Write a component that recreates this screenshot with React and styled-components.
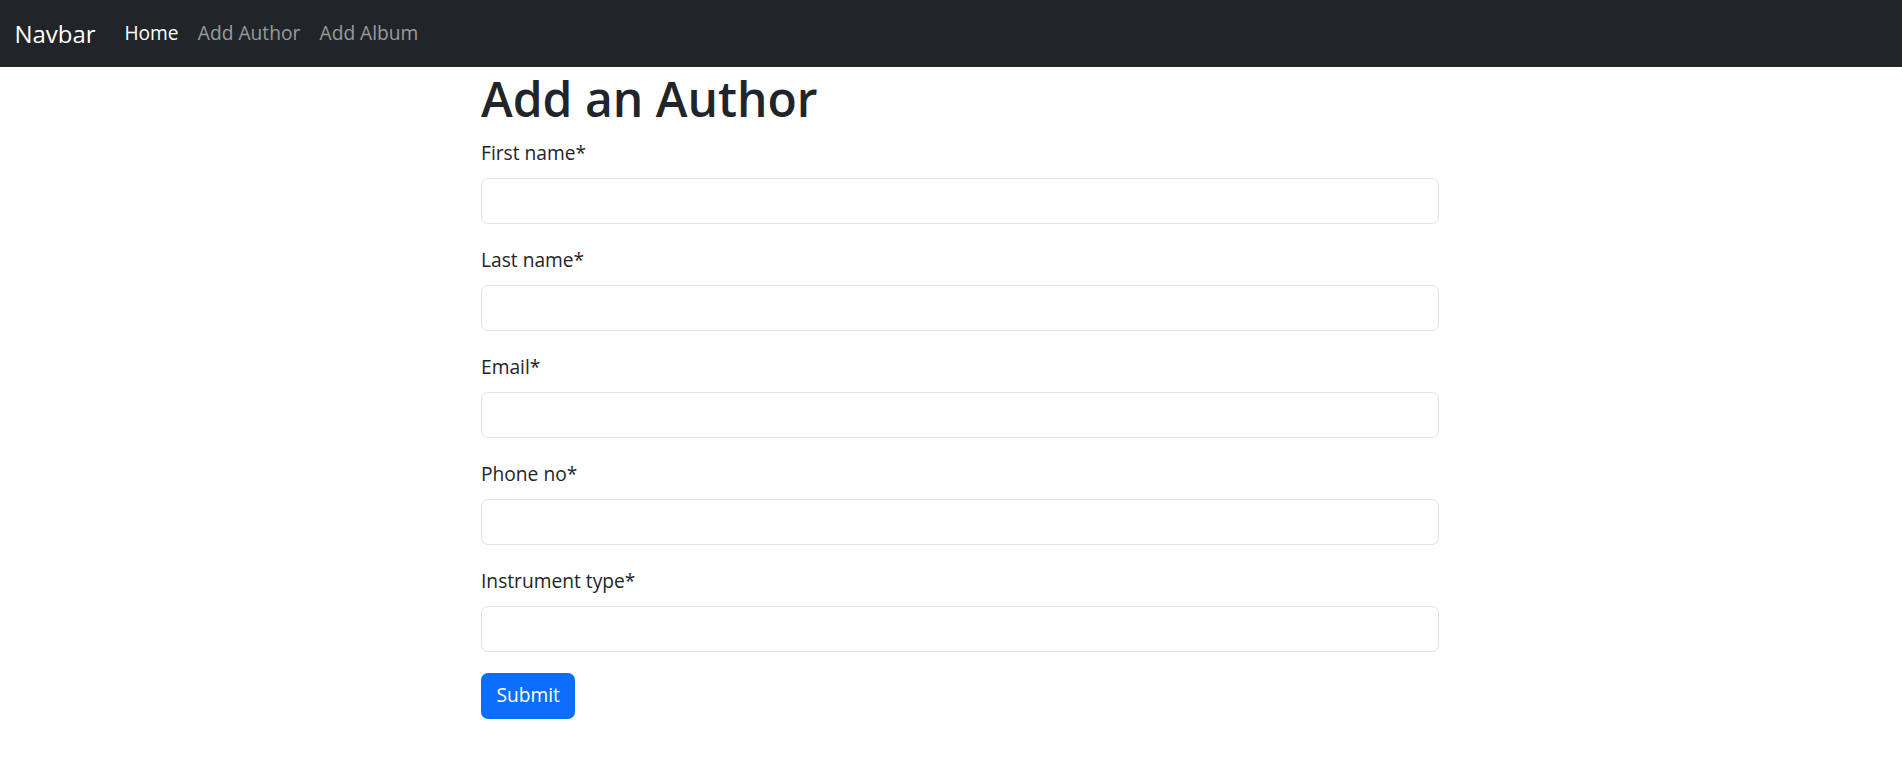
import React, { useState } from "react";
import styled, { createGlobalStyle } from "styled-components";

const GlobalStyle = createGlobalStyle`
  body {
    margin: 0;
    background: #fff;
    color: #212529;
    font-family: "Open Sans", "Noto Sans", "Liberation Sans", sans-serif;
    font-size: 19.2px;
    line-height: 1.5;
  }
  * {
    box-sizing: border-box;
  }
`;

const NavStyle = styled.nav`
  display: flex;
  align-items: center;
  height: 67px;
  padding: 0 14.4px;
  background: #212529;
`;

const Brand = styled.a`
  color: #fff;
  font-size: 24px;
  line-height: 36px;
  margin-right: 19.2px;
  text-decoration: none;
`;

const NavLink = styled.a`
  padding: 0 9.6px;
  font-size: 19.2px;
  color: ${(props) => (props.active ? "#fff" : "rgba(255, 255, 255, 0.55)")};
  text-decoration: none;
`;

const Container = styled.div`
  width: 958px;
  margin-left: calc(50% - 470px);
  padding-top: 3px;
`;

const Title = styled.h1`
  margin: 0 0 11.6px;
  font-size: 48px;
  font-weight: 600;
  line-height: 1.2;
`;

const Group = styled.div`
  margin-bottom: 22.6px;
`;

const Label = styled.label`
  display: block;
  margin-bottom: 9.6px;
  line-height: 28.8px;
`;

const Input = styled.input`
  display: block;
  width: 100%;
  height: 46px;
  padding: 7px 14px;
  font: inherit;
  border: 1px solid #dee2e6;
  border-radius: 7px;
  outline: none;
`;

const Button = styled.button`
  margin-top: -1.6px;
  height: 46px;
  padding: 0 15.4px;
  font: inherit;
  color: #fff;
  background: #0d6efd;
  border: none;
  border-radius: 7px;
`;

const fields = [
  { name: "firstName", label: "First name*" },
  { name: "lastName", label: "Last name*" },
  { name: "email", label: "Email*" },
  { name: "phone", label: "Phone no*" },
  { name: "instrument", label: "Instrument type*" },
];

const App = () => {
  const [author, setAuthor] = useState({
    firstName: "",
    lastName: "",
    email: "",
    phone: "",
    instrument: "",
  });

  const inputChange = (e) => {
    setAuthor({ ...author, [e.target.name]: e.target.value });
  };

  return (
    <>
      <GlobalStyle />
      <NavStyle>
        <Brand href="#">Navbar</Brand>
        <NavLink href="#" active>
          Home
        </NavLink>
        <NavLink href="#">Add Author</NavLink>
        <NavLink href="#">Add Album</NavLink>
      </NavStyle>
      <Container>
        <Title>Add an Author</Title>
        <form onSubmit={(e) => e.preventDefault()}>
          {fields.map((f) => (
            <Group key={f.name}>
              <Label htmlFor={f.name}>{f.label}</Label>
              <Input
                id={f.name}
                name={f.name}
                value={author[f.name]}
                onChange={inputChange}
              />
            </Group>
          ))}
          <Button type="submit">Submit</Button>
        </form>
      </Container>
    </>
  );
};

export default App;
